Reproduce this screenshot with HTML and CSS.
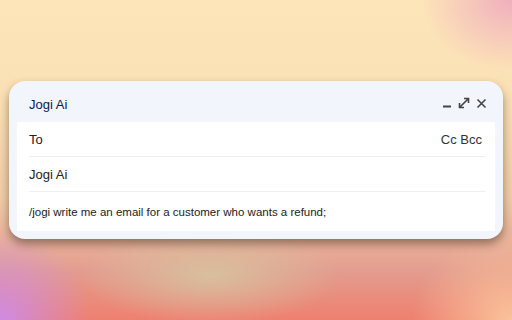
FILE: index.html
```html
<!DOCTYPE html>
<html>
<head>
<meta charset="utf-8">
<link rel="stylesheet" href="styles.css">
</head>
<body>
<div class="compose">
  <div class="header">
    <span class="title">Jogi Ai</span>
    <div class="actions">
      <svg class="ic" width="10" height="12" viewBox="0 0 10 12"><path d="M1 9.5H9" stroke="#444" stroke-width="2"/></svg>
      <svg class="ic" width="12" height="12" viewBox="0 0 12 12"><path d="M1.5 10.5L10.5 1.5M6 1.5H10.5V6M1.5 6V10.5H6" stroke="#444" stroke-width="1.6" fill="none"/></svg>
      <svg class="ic" width="11" height="11" viewBox="0 0 11 11"><path d="M1.5 1.5L9.5 9.5M9.5 1.5L1.5 9.5" stroke="#444" stroke-width="1.6"/></svg>
    </div>
  </div>
  <div class="body">
    <div class="row">
      <span>To</span>
      <span class="ccbcc">Cc Bcc</span>
    </div>
    <div class="row">
      <span>Jogi Ai</span>
    </div>
    <div class="row msg">
      <span>/jogi write me an email for a customer who wants a refund;</span>
    </div>
  </div>
</div>
</body>
</html>
```
FILE: styles.css
```css
html, body {
  margin: 0;
  width: 512px;
  height: 320px;
  overflow: hidden;
}
body {
  font-family: "Liberation Sans", Arial, sans-serif;
  background:
    radial-gradient(ellipse 130px 50px at 210px 275px, rgba(215,195,160,0.9), rgba(215,195,160,0) 100%),
    radial-gradient(ellipse 90px 70px at 512px 0px, rgba(238,165,190,0.85), rgba(238,165,190,0) 100%),
    radial-gradient(ellipse 90px 90px at 0px 320px, rgba(205,140,235,0.95), rgba(205,140,235,0) 100%),
    radial-gradient(ellipse 100px 90px at 512px 320px, rgba(250,195,155,1), rgba(250,195,155,0) 100%),
    linear-gradient(180deg, #fde4b9 0%, #fbe0b5 30%, #f1cca8 62%, #e39c8e 85%, #ef806f 100%);
  padding-top: 81px;
  box-sizing: border-box;
}
.compose {
  margin-left: 9px;
  width: 494px;
  height: 158px;
  background: #f2f5fc;
  border-radius: 16px;
  box-shadow: 0 5px 10px rgba(40, 30, 20, 0.45);
  display: flex;
  flex-direction: column;
  box-sizing: border-box;
  padding-bottom: 8px;
}
.header {
  height: 41px;
  flex: none;
  display: flex;
  align-items: center;
  padding: 0 16px 0 20px;
  justify-content: space-between;
}
.title {
  color: #041e49;
  font-size: 13px;
  margin-top: 5px;
}
.actions {
  display: flex;
  align-items: center;
  gap: 6px;
  margin-top: 3px;
}
.ic { display: block; }
.body {
  margin: 0 8px;
  background: #fff;
  flex: 1;
  display: flex;
  flex-direction: column;
  padding: 0 9px 0 12px;
}
.row {
  display: flex;
  justify-content: space-between;
  align-items: center;
  height: 34px;
  flex: none;
  border-bottom: 1px solid #eff0f2;
  font-size: 13px;
  color: #222;
  padding-right: 4px;
}
.row.msg {
  border-bottom: none;
  flex: 1;
  height: auto;
  font-size: 11.5px;
}
.ccbcc { color: #333; }
```
